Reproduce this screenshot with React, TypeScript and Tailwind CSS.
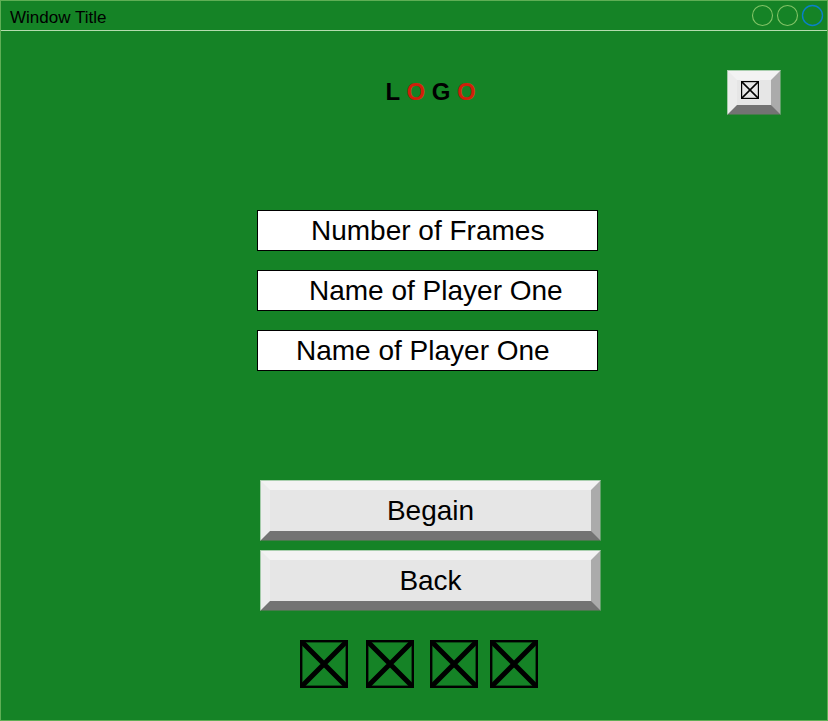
import type { ReactNode } from "react";

function CrossBox({ size, stroke, diagonal }: { size: number; stroke: number; diagonal: number }) {
  const h = stroke / 2;
  return (
    <svg width={size} height={size} viewBox={`0 0 ${size} ${size}`} fill="none" stroke="#000" className="block shrink-0">
      <rect x={h} y={h} width={size - stroke} height={size - stroke} strokeWidth={stroke} />
      <path d={`M${h} ${h}L${size - h} ${size - h}M${size - h} ${h}L${h} ${size - h}`} strokeWidth={diagonal} />
    </svg>
  );
}

function BevelButton({ className, children }: { className: string; children: ReactNode }) {
  return (
    <button
      className={`block border border-t-[#a9cfae] border-r-[#60a068] border-b-[#487b4c] border-l-[#a5ccaa] bg-[#e6e6e6] ${className}`}
    >
      <span className="flex h-full w-full items-center justify-center border-[9.5px] border-t-[#f3f3f3] border-r-[#ababab] border-b-[#737373] border-l-[#ececec] whitespace-pre">
        {children}
      </span>
    </button>
  );
}

function Field({ text, className }: { text: string; className: string }) {
  return (
    <div className="h-[41px] w-[341px] border border-black bg-white">
      <div className={`text-[28px] leading-[39px] whitespace-nowrap ${className}`}>{text}</div>
    </div>
  );
}

export default function App() {
  return (
    <div className="flex h-[721px] w-[828px] flex-col overflow-hidden border border-[#5fae55] bg-[#158326] font-['Liberation_Sans',Arial,sans-serif] text-black">
      <header className="flex h-[30px] shrink-0 justify-between border-b border-[#b4dcae] pr-[3px] pl-[9px]">
        <h1 className="pt-0.5 text-[17px] leading-[30px]">Window Title</h1>
        <svg width="74" height="29" viewBox="0 0 74 29" fill="none" strokeWidth="1.1">
          <circle cx="12.5" cy="14.5" r="10" stroke="#82c366" />
          <circle cx="37.5" cy="14.5" r="10" stroke="#82c366" />
          <circle cx="62.5" cy="14.5" r="10" stroke="#0a80c8" strokeWidth="1.4" />
        </svg>
      </header>
      <div className="flex h-[84px] shrink-0 items-start justify-between pt-[39px] pr-[46px] pl-[384.5px]">
        <div className="pt-2 text-2xl leading-7 font-bold whitespace-nowrap">
          L <span className="text-[#d01f0a]">O</span> G <span className="text-[#d01f0a]">O</span>
        </div>
        <BevelButton className="h-[45px] w-[54px]">
          <span className="mr-2 mb-1.5">
            <CrossBox size={18} stroke={1.2} diagonal={1.5} />
          </span>
        </BevelButton>
      </div>
      <main className="flex flex-col pt-[95px]">
        <div className="ml-64 flex flex-col gap-[19px]">
          <Field text="Number of Frames" className="pl-[53px]" />
          <Field text="Name of Player One" className="pl-[51px]" />
          <Field text="Name of Player One" className="pl-[38px]" />
        </div>
        <div className="mt-[109px] ml-[259px] flex flex-col gap-[9px] text-[28px] leading-10">
          <BevelButton className="h-[61px] w-[341px]">Begain</BevelButton>
          <BevelButton className="h-[61px] w-[341px]">Back</BevelButton>
        </div>
        <div className="mt-[29px] ml-[299px] flex">
          <CrossBox size={48} stroke={2.4} diagonal={5} />
          <span className="w-[18px]" />
          <CrossBox size={48} stroke={2.4} diagonal={5} />
          <span className="w-4" />
          <CrossBox size={48} stroke={2.4} diagonal={5} />
          <span className="w-3" />
          <CrossBox size={48} stroke={2.4} diagonal={5} />
        </div>
      </main>
    </div>
  );
}
